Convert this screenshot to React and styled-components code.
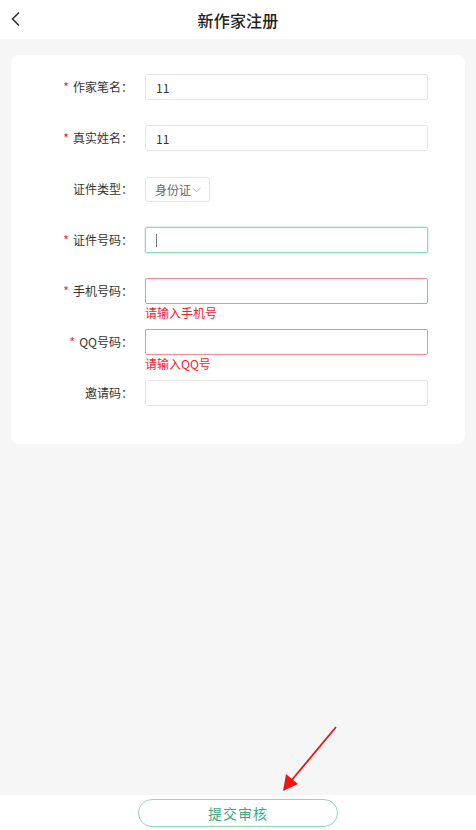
import styled, { createGlobalStyle } from "styled-components";

const GlobalStyle = createGlobalStyle`
  html, body {
    margin: 0;
    padding: 0;
    background: #f6f6f6;
    font-family: "Noto Sans CJK SC", "Noto Sans", sans-serif;
  }
  * { box-sizing: border-box; }
`;

const fields = [
  { label: "作家笔名", required: true, value: "11" },
  { label: "真实姓名", required: true, value: "11" },
  { label: "证件类型", type: "select", value: "身份证" },
  { label: "证件号码", required: true, status: "focus" },
  { label: "手机号码", required: true, status: "error", error: "请输入手机号" },
  { label: "QQ号码", required: true, status: "error", error: "请输入QQ号" },
  { label: "邀请码" },
];

const App = () => {
  return <Page>
    <GlobalStyle />
    <Header>
      <BackButton>
        <svg width="12" height="16" viewBox="0 0 12 16">
          <path d="M9 1.5 L2.5 8 L9 14.5" fill="none" stroke="#333" strokeWidth="1.6" />
        </svg>
      </BackButton>
      <Title>新作家注册</Title>
    </Header>
    <Main>
      <Card>
        {fields.map(f => (
          <FormRow key={f.label}>
            <Label>
              {f.required && <Star>*</Star>}
              {f.label}：
            </Label>
            <Control>
              {f.type === "select" ? (
                <Select>
                  {f.value}
                  <svg width="9" height="6" viewBox="0 0 9 6">
                    <path d="M0.5 0.8 L4.5 4.8 L8.5 0.8" fill="none" stroke="#aaa" strokeWidth="0.9" />
                  </svg>
                </Select>
              ) : (
                <Input status={f.status}>
                  {f.value}
                  {f.status === "focus" && <Caret />}
                </Input>
              )}
              {f.error && <ErrorText>{f.error}</ErrorText>}
            </Control>
          </FormRow>
        ))}
      </Card>
    </Main>
    <Footer>
      <SubmitButton>提交审核</SubmitButton>
    </Footer>
    <Arrow width="476" height="830" viewBox="0 0 476 830">
      <line x1="336" y1="727" x2="291" y2="781" stroke="#f01414" strokeWidth="1.8" />
      <polygon points="283,791 286,774 298,784" fill="#f01414" />
    </Arrow>
  </Page>
}

export default App;

const Page = styled.div`
  position: relative;
  height: 100vh;
  display: flex;
  flex-direction: column;
  background: #f6f6f6;
`;

const Header = styled.div`
  height: 39px;
  flex: none;
  background: #fff;
  display: flex;
  align-items: center;
  justify-content: center;
  position: relative;
`;

const BackButton = styled.div`
  position: absolute;
  left: 10px;
  top: 11px;
  display: flex;
`;

const Title = styled.div`
  font-size: 16px;
  font-weight: 500;
  color: #222;
  letter-spacing: 0.2px;
`;

const Main = styled.div`
  flex: 1;
  padding: 16px 11px 0;
`;

const Card = styled.div`
  background: #fff;
  border-radius: 8px;
  padding: 19px 37px 13px 0;
`;

const FormRow = styled.div`
  display: grid;
  grid-template-columns: 122px 1fr;
  column-gap: 12px;
  height: 51px;
  align-items: start;
`;

const Label = styled.div`
  height: 25px;
  display: flex;
  align-items: center;
  justify-content: flex-end;
  font-size: 12px;
  color: #333;
  white-space: nowrap;
`;

const Star = styled.span`
  color: #f5222d;
  margin-right: 4px;
  font-size: 12px;
`;

const Control = styled.div`
  display: flex;
  flex-direction: column;
  align-items: flex-start;
`;

const Input = styled.div`
  width: 100%;
  height: 26px;
  border: 1px solid ${p => p.status === "error" ? "#f98a93" : p.status === "focus" ? "#8ddbb8" : "#e6e6e6"};
  box-shadow: ${p => p.status === "focus" ? "0 0 0 1px rgba(120, 210, 170, 0.25)" : "none"};
  border-radius: 2px;
  display: flex;
  align-items: center;
  padding: 0 10px;
  font-size: 12px;
  color: #333;
`;

const Caret = styled.span`
  width: 1px;
  height: 13px;
  background: #777;
`;

const Select = styled.div`
  height: 25px;
  margin-top: 1px;
  border: 1px solid #e6e6e6;
  border-radius: 2px;
  display: flex;
  align-items: center;
  padding: 0 8px 0 9px;
  gap: 1px;
  font-size: 12px;
  color: #666;
  white-space: nowrap;
`;

const ErrorText = styled.div`
  font-size: 12px;
  line-height: 16px;
  margin-top: 1px;
  color: #f5222d;
`;

const Footer = styled.div`
  height: 35px;
  flex: none;
  background: #fff;
  display: flex;
  justify-content: center;
  align-items: center;
`;

const SubmitButton = styled.div`
  width: 200px;
  height: 28px;
  border: 1px solid #8fd8b8;
  border-radius: 14px;
  display: flex;
  align-items: center;
  justify-content: center;
  font-size: 14px;
  color: #3fa77e;
  letter-spacing: 1px;
`;

const Arrow = styled.svg`
  position: absolute;
  left: 0;
  top: 0;
  pointer-events: none;
`;
